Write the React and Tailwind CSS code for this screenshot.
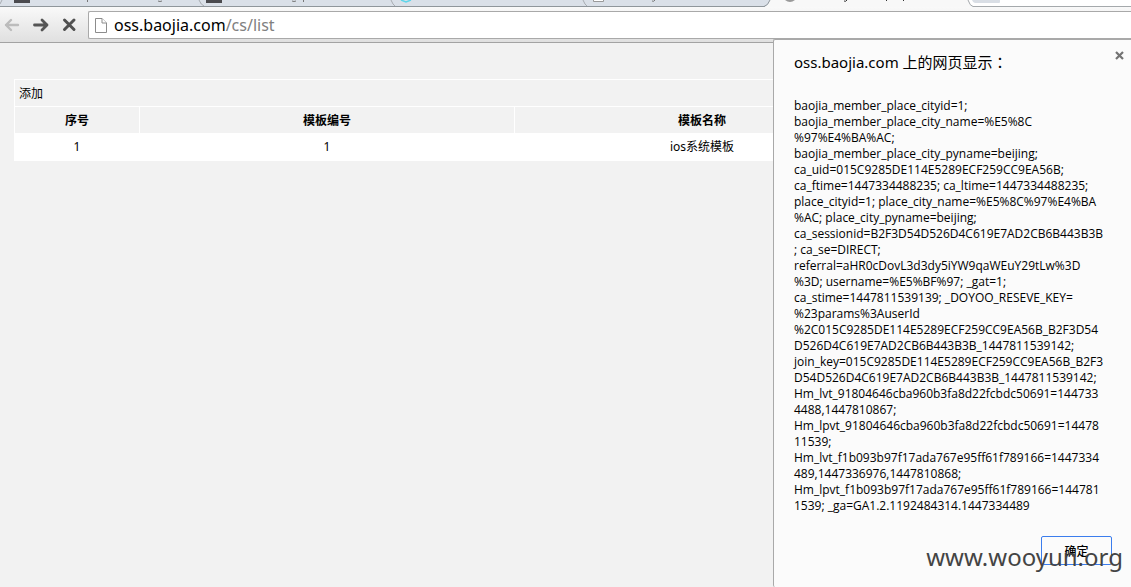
import React from "react";

const cookieLines = [
  "baojia_member_place_cityid=1;",
  "baojia_member_place_city_name=%E5%8C",
  "%97%E4%BA%AC;",
  "baojia_member_place_city_pyname=beijing;",
  "ca_uid=015C9285DE114E5289ECF259CC9EA56B;",
  "ca_ftime=1447334488235; ca_ltime=1447334488235;",
  "place_cityid=1; place_city_name=%E5%8C%97%E4%BA",
  "%AC; place_city_pyname=beijing;",
  "ca_sessionid=B2F3D54D526D4C619E7AD2CB6B443B3B",
  "; ca_se=DIRECT;",
  "referral=aHR0cDovL3d3dy5iYW9qaWEuY29tLw%3D",
  "%3D; username=%E5%BF%97; _gat=1;",
  "ca_stime=1447811539139; _DOYOO_RESEVE_KEY=",
  "%23params%3AuserId",
  "%2C015C9285DE114E5289ECF259CC9EA56B_B2F3D54",
  "D526D4C619E7AD2CB6B443B3B_1447811539142;",
  "join_key=015C9285DE114E5289ECF259CC9EA56B_B2F3",
  "D54D526D4C619E7AD2CB6B443B3B_1447811539142;",
  "Hm_lvt_91804646cba960b3fa8d22fcbdc50691=144733",
  "4488,1447810867;",
  "Hm_lpvt_91804646cba960b3fa8d22fcbdc50691=14478",
  "11539;",
  "Hm_lvt_f1b093b97f17ada767e95ff61f789166=1447334",
  "489,1447336976,1447810868;",
  "Hm_lpvt_f1b093b97f17ada767e95ff61f789166=144781",
  "1539; _ga=GA1.2.1192484314.1447334489",
];

function TabStrip() {
  return (
    <div className="h-[7px] overflow-hidden bg-[#dae0e8]" aria-hidden="true">
      <svg width="1131" height="7" viewBox="0 0 1131 7" className="block">
        <rect x="14" y="0" width="16" height="3" fill="#4b4b4f" />
        <rect x="206" y="0" width="16" height="3" fill="#4b4b4f" />
        <path d="M87.500 0v2M303.500 0v2" stroke="#777" />
        <path d="M158 1q2 1 4 0M292 1q2 1 4 0M652 1q2 1 3-1" stroke="#777" fill="none" />
        <path d="M401 0l5 2 5-2" stroke="#5fd6ea" strokeWidth="1.5" fill="none" />
        <path d="M593.500 0v1.500h10V0" stroke="#999" fill="#fff" />
        <path d="M0 4l2-4M199 0q2 5 5 6M391 0q2 5 4 6M583 0q2 5 4 6" stroke="#a9adb2" fill="none" />
        <path d="M0 6.500H765" stroke="#8f969b" />
        <path d="M764 7q4-1 6-7H968q2 6 5 7z" fill="#f8f8f8" />
        <path d="M764 6.500q4-1 6-6.500" stroke="#8f969b" fill="none" />
        <path d="M968 0q2 6 5 6.500H1131V0z" fill="#fff" />
        <path d="M968 0q2 6 5 6.500H1131" stroke="#a5a9ac" fill="none" />
        <path d="M972 0h28v2q0 1-1 1h-24q-2 0-3-3z" fill="#d9dee5" />
        <path d="M785 0q5 4 10 0z" fill="#999" />
        <path d="M844 1q2 1 3-1M886.500 0v1M903.500 0v1" stroke="#333" fill="none" />
      </svg>
    </div>
  );
}

function Toolbar() {
  return (
    <div className="flex h-9 items-start border-b border-[#a3a3a3] bg-linear-to-b from-[#f9f9f9] to-[#e0e0e0] pt-1 pl-1">
      <div className="flex h-7 w-21 shrink-0 items-center">
        <button type="button" aria-label="Back" disabled className="w-7">
          <svg width="16" height="16" viewBox="0 0 16 16" fill="none" stroke="#bcbcbc" strokeWidth="2.400" strokeLinecap="round" strokeLinejoin="round">
            <path d="M14 8H2M7 3L2 8l5 5" />
          </svg>
        </button>
        <button type="button" aria-label="Forward" className="w-7 pl-px">
          <svg width="16" height="16" viewBox="0 0 16 16" fill="none" stroke="#555" strokeWidth="2.800" strokeLinecap="round" strokeLinejoin="round">
            <path d="M1.500 8H14M9 3l5 5-5 5" />
          </svg>
        </button>
        <button type="button" aria-label="Stop" className="w-7 pl-px">
          <svg width="16" height="16" viewBox="0 0 16 16" fill="none" stroke="#505050" strokeWidth="3" strokeLinecap="round">
            <path d="M3.500 3l9.500 9.500M13 3L3.500 12.500" />
          </svg>
        </button>
      </div>
      <div className="flex h-7 min-w-0 flex-1 items-center rounded-l-xs border border-r-0 border-[#a9a9a9] bg-white pl-1.5">
        <svg width="12" height="15" viewBox="0 0 12 15" className="shrink-0" fill="#fff" stroke="#8c8c8c">
          <path d="M.5.5h6.500l4.500 4.500v9.500H.5z" />
          <path d="M7 .5v4.500h4.500" />
        </svg>
        <a href="#list" className="pl-[7px] text-base leading-6 text-[#808080]">
          <span className="text-black">oss.baojia.com</span>/cs/list
        </a>
      </div>
    </div>
  );
}

function TemplateTable() {
  return (
    <table className="w-full table-fixed border-collapse bg-white text-center text-xs text-black">
      <colgroup>
        <col className="w-[125px]" />
        <col className="w-[375px]" />
        <col className="w-[375px]" />
        <col />
      </colgroup>
      <thead>
        <tr className="h-[27px]">
          <td colSpan={4} className="border border-white bg-[#f2f2f2] px-1 pt-0.5 text-left">
            <a href="#add">添加</a>
          </td>
        </tr>
        <tr className="h-[27px] bg-[#f2f2f2]">
          <th className="border border-white pt-0.5 font-bold">序号</th>
          <th className="border border-white pt-0.5 font-bold">模板编号</th>
          <th className="border border-white pt-0.5 font-bold">模板名称</th>
          <td className="border border-white" />
        </tr>
      </thead>
      <tbody>
        <tr className="h-[27px]">
          <td>1</td>
          <td>1</td>
          <td>ios系统模板</td>
          <td />
        </tr>
      </tbody>
    </table>
  );
}

function AlertDialog() {
  return (
    <div
      role="dialog"
      aria-labelledby="alert-title"
      className="absolute top-[39px] right-0 bottom-0 flex w-[358px] flex-col rounded-l-xs border-t border-l border-[#a9a9a9] bg-[#fbfbfb] pl-5 text-black"
    >
      <div className="flex items-start justify-between pt-2 pr-1">
        <h1 id="alert-title" className="pt-1 text-[15px] leading-5">
          oss.baojia.com 上的网页显示<span className="font-['Noto_Sans_CJK_TC',sans-serif]">：</span>
        </h1>
        <button type="button" aria-label="Close" className="p-[3px]">
          <svg width="9" height="9" viewBox="0 0 9 9" stroke="#737373" strokeWidth="2.200">
            <path d="M1 1l7 7M8 1L1 8" />
          </svg>
        </button>
      </div>
      <div className="pt-[26px] font-['Open_Sans','Noto_Sans_CJK_SC',sans-serif] text-xs leading-4 whitespace-nowrap">
        {cookieLines.map((line, i) => (
          <p key={i}>{line}</p>
        ))}
      </div>
      <div className="flex justify-end pt-[22px] pr-[19px]">
        <button type="button" className="h-[29px] w-[71px] rounded-xs border border-[#3b7ded] bg-[#fbfbfb] pt-0.5 text-xs font-medium">
          确定
        </button>
      </div>
    </div>
  );
}

export default function App() {
  return (
    <div className="relative flex min-h-screen flex-col overflow-hidden bg-[#f2f2f2] font-['Noto_Sans','Noto_Sans_CJK_SC',sans-serif]">
      <TabStrip />
      <Toolbar />
      <main className="pt-9 pl-3.5">
        <TemplateTable />
      </main>
      <AlertDialog />
      <div className="pointer-events-none absolute right-2 bottom-3 text-2xl leading-9 text-[#444]">www.wooyun.org</div>
    </div>
  );
}
